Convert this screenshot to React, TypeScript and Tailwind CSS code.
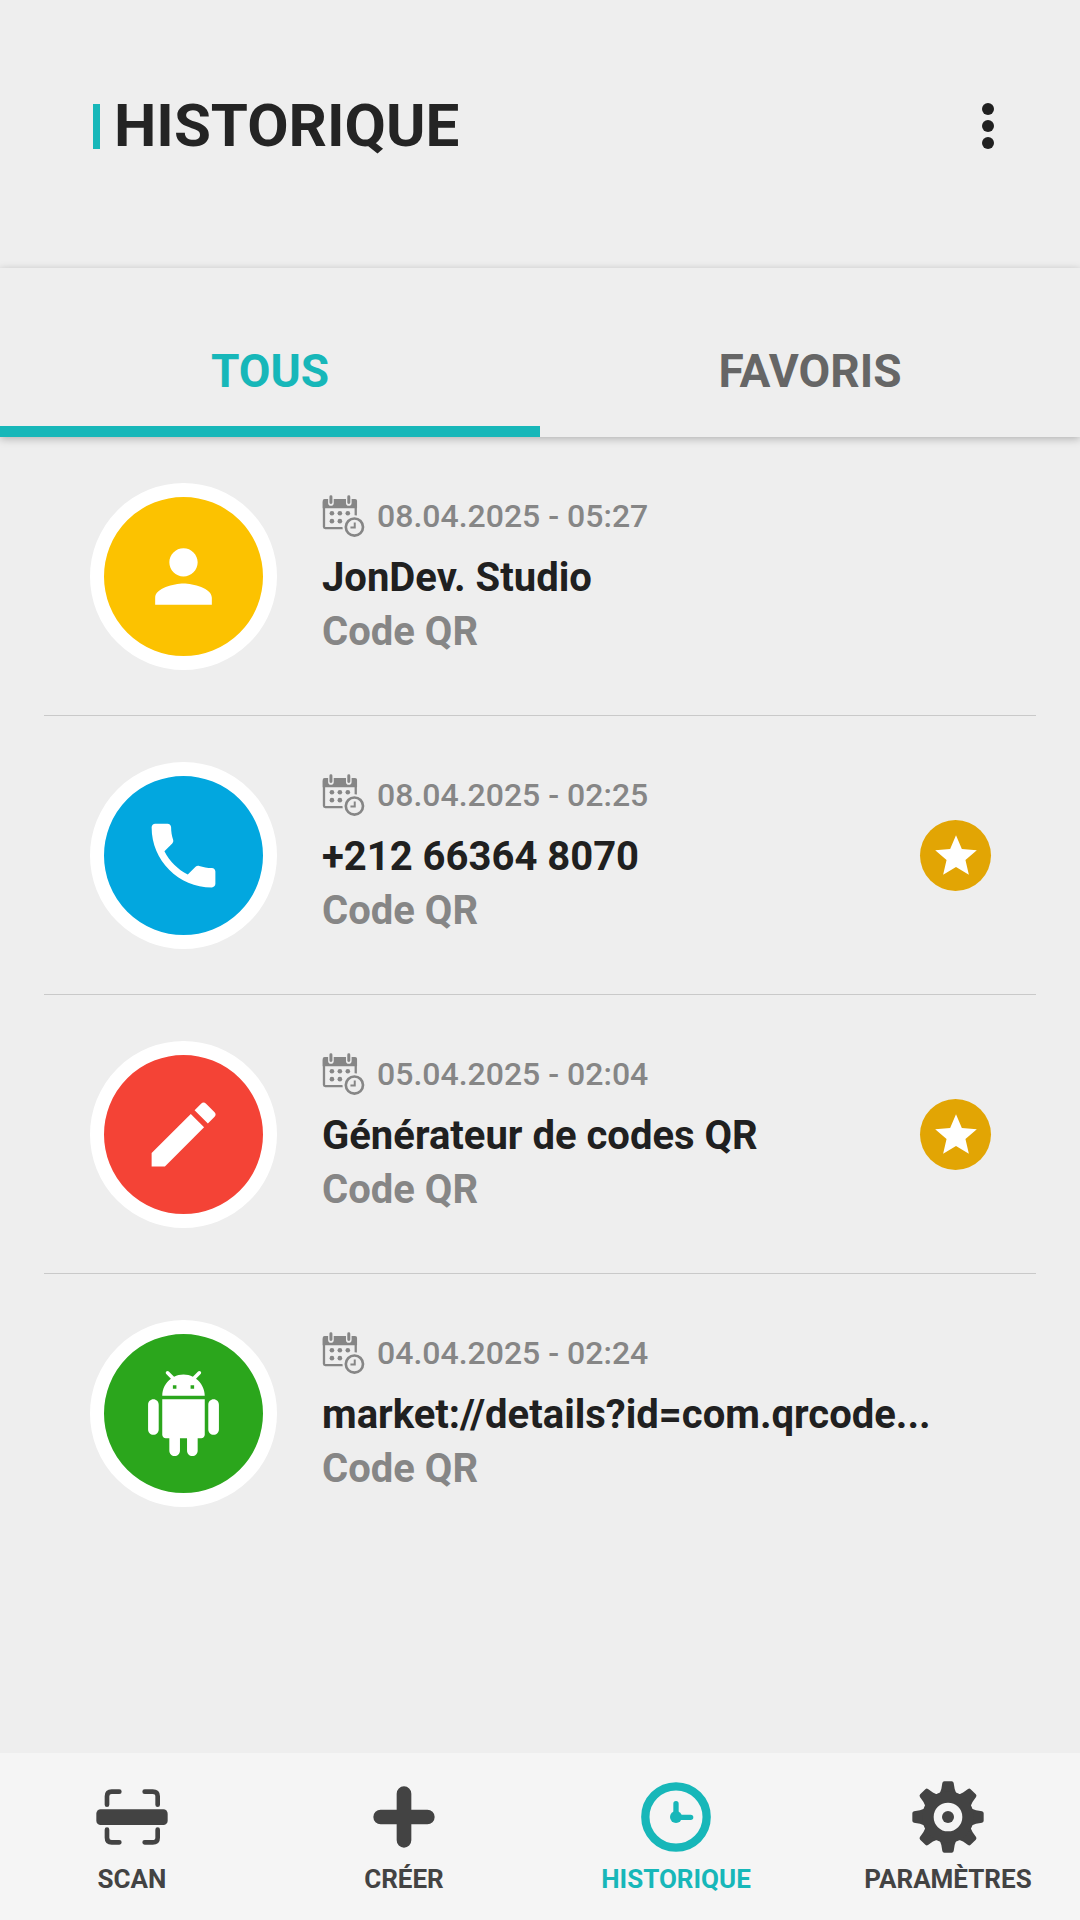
import React, { useState } from "react";
import { MdPerson, MdPhone, MdEdit } from "react-icons/md";

function AndroidIcon({ className }: { className?: string }) {
    return (
        <svg viewBox="0 0 24 24" fill="currentColor" className={className} aria-hidden="true">
            <path d="M6 18c0 .55.45 1 1 1h1v3.5c0 .83.67 1.5 1.5 1.5s1.5-.67 1.5-1.5V19h2v3.5c0 .83.67 1.5 1.5 1.5s1.5-.67 1.5-1.5V19h1c.55 0 1-.45 1-1V8H6v10zM3.5 8C2.67 8 2 8.67 2 9.5v7c0 .83.67 1.5 1.5 1.5S5 17.33 5 16.5v-7C5 8.67 4.33 8 3.5 8zm17 0c-.83 0-1.5.67-1.5 1.5v7c0 .83.67 1.5 1.5 1.5s1.5-.67 1.5-1.5v-7c0-.83-.67-1.5-1.5-1.5zm-4.97-5.84l1.3-1.3c.2-.2.2-.51 0-.71-.2-.2-.51-.2-.71 0l-1.48 1.48C13.85 1.23 12.95 1 12 1c-.96 0-1.86.23-2.66.63L7.85.15c-.2-.2-.51-.2-.71 0-.2.2-.2.51 0 .71l1.31 1.31C6.97 3.26 6 5.01 6 7h12c0-1.99-.97-3.75-2.47-4.84zM10 5H9V4h1v1zm5 0h-1V4h1v1z" />
        </svg>
    );
}

function CalendarIcon() {
    return (
        <svg viewBox="0 0 130 130" className="size-[43px] shrink-0 text-[#868686]" aria-hidden="true">
            <rect x="6" y="18" width="96" height="82" rx="4" fill="none" stroke="currentColor" strokeWidth="7" />
            <path d="M2 18q0-6 6-6h92q6 0 6 6v22H2z" fill="currentColor" />
            <g strokeLinecap="round">
                <path d="M27 2v22M81 2v22" stroke="#eeeeee" strokeWidth="17" />
                <path d="M27 5v18M81 5v18" stroke="currentColor" strokeWidth="9" />
            </g>
            <g fill="currentColor">
                <circle cx="30" cy="55" r="7" />
                <circle cx="54" cy="55" r="7" />
                <circle cx="78" cy="55" r="7" />
                <circle cx="30" cy="79" r="7" />
                <circle cx="54" cy="79" r="7" />
            </g>
            <circle cx="98" cy="97" r="36" fill="#eeeeee" />
            <circle cx="98" cy="97" r="26" fill="none" stroke="currentColor" strokeWidth="8" />
            <path d="M99 83v15H86" fill="none" stroke="currentColor" strokeWidth="6" />
        </svg>
    );
}

function StarIcon() {
    return (
        <svg viewBox="0 0 24 23" fill="currentColor" className="w-[50px]" aria-hidden="true">
            <path d="M12 17.27L18.18 21l-1.64-7.03L22 9.24l-7.19-.61L12 2 9.19 8.63 2 9.24l5.46 4.73L5.82 21z" />
        </svg>
    );
}

function ScanIcon() {
    return (
        <svg viewBox="0 0 216 216" className="size-18" aria-hidden="true">
            <rect x="1" y="85" width="214" height="47" rx="13" fill="currentColor" />
            <g fill="none" stroke="currentColor" strokeWidth="14" strokeLinecap="round">
                <path d="M33 71V46q0-14 14-14h23" />
                <path d="M146 32h24q15 0 15 14v25" />
                <path d="M33 146v24q0 14 14 14h23" />
                <path d="M146 184h24q15 0 15-14v-24" />
            </g>
        </svg>
    );
}

function PlusIcon() {
    return (
        <svg viewBox="0 0 216 216" className="size-18" aria-hidden="true">
            <path d="M108 38v140M38 108h140" stroke="currentColor" strokeWidth="44" strokeLinecap="round" />
        </svg>
    );
}

function ClockIcon() {
    return (
        <svg viewBox="0 0 216 216" className="size-18" aria-hidden="true">
            <circle cx="108" cy="108" r="92" fill="none" stroke="currentColor" strokeWidth="25" />
            <circle cx="108" cy="108" r="18" fill="currentColor" />
            <path d="M108 108V68M108 109h44" stroke="currentColor" strokeWidth="16" strokeLinecap="round" />
        </svg>
    );
}

function GearIcon() {
    return (
        <svg viewBox="-108 -108 216 216" className="size-18" aria-hidden="true">
            <g fill="currentColor">
                {[0, 45, 90, 135, 180, 225, 270, 315].map((angle) => (
                    <path
                        key={angle}
                        d="M-30-66Q-22-74-20-84L-17-102Q-16-107-11-107H11Q16-107 17-102L20-84Q22-74 30-66L24-50H-24Z"
                        transform={`rotate(${angle})`}
                    />
                ))}
            </g>
            <circle r="60" fill="none" stroke="currentColor" strokeWidth="34" />
            <circle r="18" fill="currentColor" />
        </svg>
    );
}

const entries = [
    {
        date: "08.04.2025 - 05:27",
        title: "JonDev. Studio",
        color: "bg-[#fcc200]",
        icon: <MdPerson className="size-[85px]" />,
        favorite: false,
    },
    {
        date: "08.04.2025 - 02:25",
        title: "+212 66364 8070",
        color: "bg-[#02a7df]",
        icon: <MdPhone className="size-[85px]" />,
        favorite: true,
    },
    {
        date: "05.04.2025 - 02:04",
        title: "Générateur de codes QR",
        color: "bg-[#f44336]",
        icon: <MdEdit className="size-[85px]" />,
        favorite: true,
    },
    {
        date: "04.04.2025 - 02:24",
        title: "market://details?id=com.qrcode...",
        color: "bg-[#2ba61c]",
        icon: <AndroidIcon className="size-[85px]" />,
        favorite: false,
    },
];

const tabs = ["TOUS", "FAVORIS"];

const navItems = [
    { label: "SCAN", icon: <ScanIcon /> },
    { label: "CRÉER", icon: <PlusIcon /> },
    { label: "HISTORIQUE", icon: <ClockIcon />, active: true },
    { label: "PARAMÈTRES", icon: <GearIcon /> },
];

export default function App() {
    const [tab, setTab] = useState("TOUS");
    const visible = tab === "TOUS" ? entries : entries.filter((entry) => entry.favorite);

    return (
        <div className="flex min-h-screen flex-col bg-[#eeeeee] font-['Roboto',sans-serif]">
            <header className="flex items-center justify-between pt-[86px] pr-[76px] pb-[102px] pl-[93px]">
                <div className="flex items-center gap-[14px]">
                    <span className="h-[45px] w-[7px] bg-[#17b7b9]" />
                    <h1 className="text-[60px] leading-[80px] font-bold text-[#242424]">HISTORIQUE</h1>
                </div>
                <button type="button" aria-label="Plus d'options" className="flex h-12 w-8 items-center justify-center">
                    <svg viewBox="0 0 12 46" className="h-[46px] w-3" fill="#202020">
                        <circle cx="6" cy="6" r="6" />
                        <circle cx="6" cy="23" r="6" />
                        <circle cx="6" cy="40" r="6" />
                    </svg>
                </button>
            </header>

            <div role="tablist" className="relative grid grid-cols-2 shadow-[0_2px_8px_rgba(0,0,0,0.25)]">
                {tabs.map((name) => (
                    <button
                        key={name}
                        type="button"
                        role="tab"
                        aria-selected={tab === name}
                        onClick={() => setTab(name)}
                        className={`border-b-[11px] bg-[#eeeeee] pt-[73px] pb-[25px] text-[46px] leading-[60px] font-bold ${
                            tab === name ? "border-[#17b7b9] text-[#17b7b9]" : "border-[#eeeeee] text-[#666666]"
                        }`}
                    >
                        {name}
                    </button>
                ))}
            </div>

            <ul className="flex flex-col px-11">
                {visible.map((entry) => (
                    <li
                        key={entry.title}
                        className="flex h-[279px] items-center border-b border-[#c9c9c9] pr-[45px] pl-[46px] last:border-transparent"
                    >
                        <div
                            className={`flex size-[187px] shrink-0 items-center justify-center rounded-full border-14 border-white text-white ${entry.color}`}
                        >
                            {entry.icon}
                        </div>
                        <div className="ml-[45px] min-w-0 grow">
                            <div className="flex items-center gap-3 text-[#868686]">
                                <CalendarIcon />
                                <time className="text-[32px] leading-[44px] font-medium">{entry.date}</time>
                            </div>
                            <h2 className="mt-3 text-[40px] leading-[56px] font-bold whitespace-nowrap text-[#202020]">
                                {entry.title}
                            </h2>
                            <p className="text-[40px] leading-[52px] font-bold text-[#868686]">Code QR</p>
                        </div>
                        {entry.favorite && (
                            <button
                                type="button"
                                aria-label="Retirer des favoris"
                                className="flex size-[71px] shrink-0 items-center justify-center rounded-full bg-[#e2a504] text-white"
                            >
                                <StarIcon />
                            </button>
                        )}
                    </li>
                ))}
            </ul>

            <nav className="mt-auto overflow-hidden bg-[#f5f5f5] pt-7 pb-[23px]">
                <div className="-mx-1 grid grid-cols-4">
                    {navItems.map((item) => (
                        <a
                            key={item.label}
                            href="#"
                            className={`flex flex-col items-center gap-2 ${item.active ? "text-[#17b7b9]" : "text-[#434343]"}`}
                        >
                            {item.icon}
                            <span className="text-[26px] leading-[36px] font-bold">{item.label}</span>
                        </a>
                    ))}
                </div>
            </nav>
        </div>
    );
}
